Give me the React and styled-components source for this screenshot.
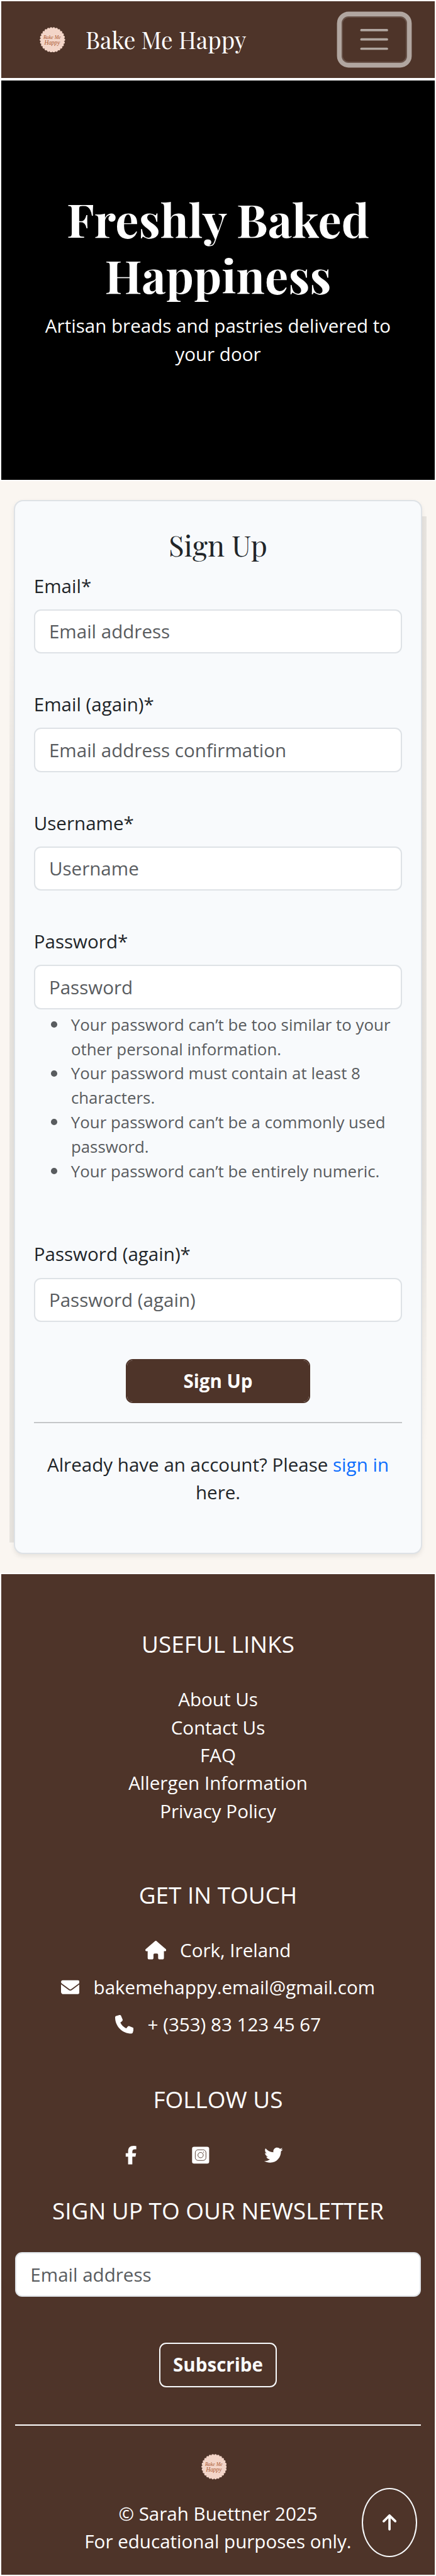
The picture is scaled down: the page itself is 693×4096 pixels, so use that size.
import React from "react";
import styled, { createGlobalStyle } from "styled-components";
import { FaHouse, FaEnvelope, FaPhone, FaFacebookF, FaTwitter, FaArrowUp } from "react-icons/fa6";

const SCALE = 4096 / 4432;
const u = (n) => `${(n * SCALE).toFixed(3)}px`;

const brown = "#4e3429";
const light = "#f8fafc";
const line = "#dee2e6";
const ink = "#212529";
const muted = "#595c5f";
const sans = `"Open Sans", "Noto Sans", sans-serif`;
const serif = `"Playfair Display", "Liberation Serif", serif`;

const GlobalStyle = createGlobalStyle`
  *, *::before, *::after { box-sizing: border-box; }
  body {
    margin: 0;
    background: #faf6f1;
    color: ${ink};
    font-family: ${sans};
    font-size: ${u(32)};
    line-height: ${u(48)};
  }
  h1, h2, h3, p, ul { margin: 0; padding: 0; font-weight: 400; }
`;

const Navbar = styled.nav`
  display: flex;
  align-items: center;
  height: ${u(136)};
  padding: 0 ${u(48)} 0 ${u(66)};
  background: ${brown};
  border: 2px solid #fff;
`;

const Brand = styled.a`
  display: flex;
  align-items: center;
  flex: 1;
  gap: ${u(35)};
  color: #fff;
  font-family: ${serif};
  font-size: ${u(40)};
  white-space: nowrap;
`;

const Toggler = styled.button`
  display: flex;
  align-items: center;
  justify-content: center;
  width: ${u(112)};
  height: ${u(80)};
  padding: 0;
  background: transparent;
  border: 2px solid rgba(255, 255, 255, 0.15);
  border-radius: ${u(12)};
  box-shadow: 0 0 0 ${u(8)} #b1a6a0;
`;

const Hero = styled.header`
  height: ${u(692)};
  padding-top: ${u(191)};
  background: #000;
  border: 2px solid #fff;
  color: #fff;
  text-align: center;
`;

const HeroTitle = styled.h1`
  width: ${u(560)};
  margin: 0 auto;
  font-family: ${serif};
  font-size: ${u(80)};
  font-weight: 700;
  line-height: ${u(96)};
`;

const HeroText = styled.p`
  margin: ${u(16)} auto 0;
  width: ${u(640)};
`;

const Main = styled.main`
  height: ${u(1878)};
  padding: ${u(32)} ${u(24)};
  background:
    linear-gradient(to bottom, rgba(0, 0, 0, 0), rgba(0, 0, 0, 0.075) 28%) ${u(16)} ${u(172)} / ${u(9)} ${u(1654)} no-repeat,
    linear-gradient(to top, rgba(0, 0, 0, 0), rgba(0, 0, 0, 0.075) 28%) right ${u(16)} top ${u(60)} / ${u(9)} ${u(1600)} no-repeat;
`;

const Card = styled.section`
  height: ${u(1814)};
  padding: ${u(46)} ${u(32)};
  background: ${light};
  border: 2px solid ${line};
  border-radius: ${u(16)};
  box-shadow: 0 ${u(4)} ${u(8)} rgba(0, 0, 0, 0.075);
`;

const CardTitle = styled.h2`
  height: ${u(76.2)};
  font-family: ${serif};
  font-size: ${u(49.15)};
  line-height: ${u(59)};
  text-align: center;
`;

const Field = styled.div`
  margin-bottom: ${u(64)};
`;

const Label = styled.label`
  display: block;
  margin-bottom: ${u(16)};
`;

const Input = styled.input`
  display: block;
  width: 100%;
  height: ${u(76)};
  padding: 0 ${u(24)};
  background: #fff;
  border: 2px solid ${line};
  border-radius: ${u(12)};
  font: inherit;
  &::placeholder { color: ${muted}; opacity: 1; }
`;

const Rules = styled.ul`
  height: ${u(334)};
  padding: ${u(5.5)} 0 0 ${u(64)};
  color: ${muted};
  font-size: ${u(28)};
  line-height: ${u(42)};
  list-style: none;

  li::before {
    content: "";
    display: inline-block;
    width: ${u(10.5)};
    height: ${u(10.5)};
    margin: 0 ${u(23.5)} 0 ${u(-34)};
    border-radius: 50%;
    background: ${muted};
    vertical-align: ${u(5.2)};
  }
`;

const SubmitButton = styled.button`
  display: block;
  width: ${u(317)};
  height: ${u(76)};
  margin: 0 auto;
  padding: 0;
  background: ${brown};
  background-clip: padding-box;
  border: 2px solid ${brown};
  border-radius: ${u(12)};
  color: #fff;
  font: inherit;
  font-weight: 700;
`;

const Rule = styled.hr`
  height: 2px;
  margin: ${(p) => (p.$footer ? `${u(64)} 0 ${u(49)}` : `${u(32)} 0 ${u(48)}`)};
  background: ${(p) => (p.$footer ? "#fff" : "#c4c6c8")};
  border: 0;
`;

const Centered = styled.p`
  text-align: center;
`;

const SignInLink = styled.a`
  color: #0d6efd;
`;

const Footer = styled.footer`
  height: ${u(1726)};
  padding: ${u(96)} ${u(24)} 0;
  background: ${brown};
  border: 2px solid #fff;
  color: #fff;
  text-align: center;
`;

const FooterTitle = styled.h3`
  height: ${u(48)};
  margin-bottom: ${(p) => u(p.$gap)};
  font-size: ${u(40)};
`;

const LinkList = styled.ul`
  height: ${u(336)};
  list-style: none;
`;

const Icon = styled.span`
  display: inline-flex;
  flex: none;
  width: ${(p) => u(p.$width)};
  height: ${u(32)};
  svg { display: block; width: 100%; height: 100%; }
`;

const ContactList = styled.ul`
  display: flex;
  flex-direction: column;
  gap: ${u(16)};
  height: ${u(257)};
  list-style: none;
`;

const ContactItem = styled.li`
  display: flex;
  align-items: center;
  justify-content: center;
  gap: ${u(24)};
`;

const Socials = styled.div`
  display: flex;
  align-items: center;
  justify-content: center;
  gap: ${u(95)};
  height: ${u(48)};
  margin: 0 ${u(48)} ${u(47)} 0;
`;

const SubscribeButton = styled.button`
  display: block;
  width: ${u(202)};
  height: ${u(76)};
  margin: ${u(80)} auto 0;
  padding: 0;
  background: transparent;
  border: 2px solid ${light};
  border-radius: ${u(12)};
  color: ${light};
  font: inherit;
  font-weight: 700;
`;

const FooterLogo = styled.div`
  display: flex;
  justify-content: center;
  height: ${u(79)};
  margin-right: ${u(14)};
`;

const BackToTop = styled.a`
  position: fixed;
  right: ${u(32)};
  bottom: ${u(32)};
  display: flex;
  align-items: center;
  justify-content: center;
  width: ${u(96)};
  height: ${u(120)};
  border: 2px solid ${light};
  border-radius: 50%;
  color: #fff;
`;

const LogoSvg = styled.svg`
  display: block;
  width: ${u(44)};
  height: ${u(44)};
`;

const scallops = Array.from({ length: 26 }, (_, i) => {
  const a = (i / 26) * Math.PI * 2;
  return [22 + Math.cos(a) * 19.6, 22 + Math.sin(a) * 19.6];
});

function Logo() {
  return (
    <LogoSvg viewBox="0 0 44 44">
      <g fill="#f3d5c8">
        <circle cx="22" cy="22" r="20" />
        {scallops.map(([x, y], i) => (
          <circle key={i} cx={x} cy={y} r="2.3" />
        ))}
      </g>
      <g fill="#a9552f" fontFamily="Liberation Serif, serif" fontStyle="italic" textAnchor="middle">
        <text x="21.5" y="20.5" fontSize="10" textLength="30" lengthAdjust="spacingAndGlyphs">Bake Me</text>
        <text x="21.5" y="30" fontSize="10.5" textLength="27" lengthAdjust="spacingAndGlyphs">Happy</text>
      </g>
    </LogoSvg>
  );
}

function MenuIcon() {
  return (
    <svg width={60 * SCALE} height={60 * SCALE} viewBox="0 0 30 30">
      <path stroke="#b1a6a0" strokeLinecap="round" strokeWidth="2" d="M4 7h22M4 15h22M4 23h22" />
    </svg>
  );
}

function InstagramIcon() {
  return (
    <svg viewBox="0 0 30 32">
      <rect x="0.3" y="1.5" width="29.4" height="29" rx="3.5" fill="#fff" />
      <g fill="none" stroke={brown} strokeWidth="1">
        <rect x="5.8" y="6.8" width="18.4" height="18.4" rx="5" />
        <circle cx="15" cy="16" r="4.6" />
      </g>
      <circle cx="20.2" cy="10.9" r="0.8" fill={brown} />
    </svg>
  );
}

function TextField({ label, placeholder, type = "text", children }) {
  return (
    <Field>
      <Label>{label}*</Label>
      <Input type={type} placeholder={placeholder} />
      {children}
    </Field>
  );
}

export default function App() {
  return (
    <>
      <GlobalStyle />
      <Navbar>
        <Brand>
          <Logo />
          Bake Me Happy
        </Brand>
        <Toggler aria-label="Toggle navigation">
          <MenuIcon />
        </Toggler>
      </Navbar>
      <Hero>
        <HeroTitle>Freshly Baked Happiness</HeroTitle>
        <HeroText>Artisan breads and pastries delivered to your door</HeroText>
      </Hero>
      <Main>
        <Card>
          <CardTitle>Sign Up</CardTitle>
          <TextField label="Email" placeholder="Email address" />
          <TextField label="Email (again)" placeholder="Email address confirmation" />
          <TextField label="Username" placeholder="Username" />
          <TextField label="Password" placeholder="Password" type="password">
            <Rules>
              <li>Your password can’t be too similar to your other personal information.</li>
              <li>Your password must contain at least 8 characters.</li>
              <li>Your password can’t be a commonly used password.</li>
              <li>Your password can’t be entirely numeric.</li>
            </Rules>
          </TextField>
          <TextField label="Password (again)" placeholder="Password (again)" type="password" />
          <SubmitButton>Sign Up</SubmitButton>
          <Rule />
          <Centered>
            Already have an account? Please <SignInLink>sign in</SignInLink> here.
          </Centered>
        </Card>
      </Main>
      <Footer>
        <FooterTitle $gap={48}>USEFUL LINKS</FooterTitle>
        <LinkList>
          <li>About Us</li>
          <li>Contact Us</li>
          <li>FAQ</li>
          <li>Allergen Information</li>
          <li>Privacy Policy</li>
        </LinkList>
        <FooterTitle $gap={47}>GET IN TOUCH</FooterTitle>
        <ContactList>
          <ContactItem><Icon $width={36}><FaHouse /></Icon>Cork, Ireland</ContactItem>
          <ContactItem><Icon $width={32}><FaEnvelope /></Icon>bakemehappy.email@gmail.com</ContactItem>
          <ContactItem><Icon $width={32}><FaPhone /></Icon>+ (353) 83 123 45 67</ContactItem>
        </ContactList>
        <FooterTitle $gap={48}>FOLLOW US</FooterTitle>
        <Socials>
          <Icon $width={20}><FaFacebookF /></Icon>
          <Icon $width={30}><InstagramIcon /></Icon>
          <Icon $width={32}><FaTwitter /></Icon>
        </Socials>
        <FooterTitle $gap={48}>SIGN UP TO OUR NEWSLETTER</FooterTitle>
        <Input type="email" placeholder="Email address" />
        <SubscribeButton>Subscribe</SubscribeButton>
        <Rule $footer />
        <FooterLogo><Logo /></FooterLogo>
        <Centered>© Sarah Buettner 2025</Centered>
        <Centered>For educational purposes only.</Centered>
      </Footer>
      <BackToTop aria-label="Back to top">
        <Icon $width={24}><FaArrowUp /></Icon>
      </BackToTop>
    </>
  );
}
